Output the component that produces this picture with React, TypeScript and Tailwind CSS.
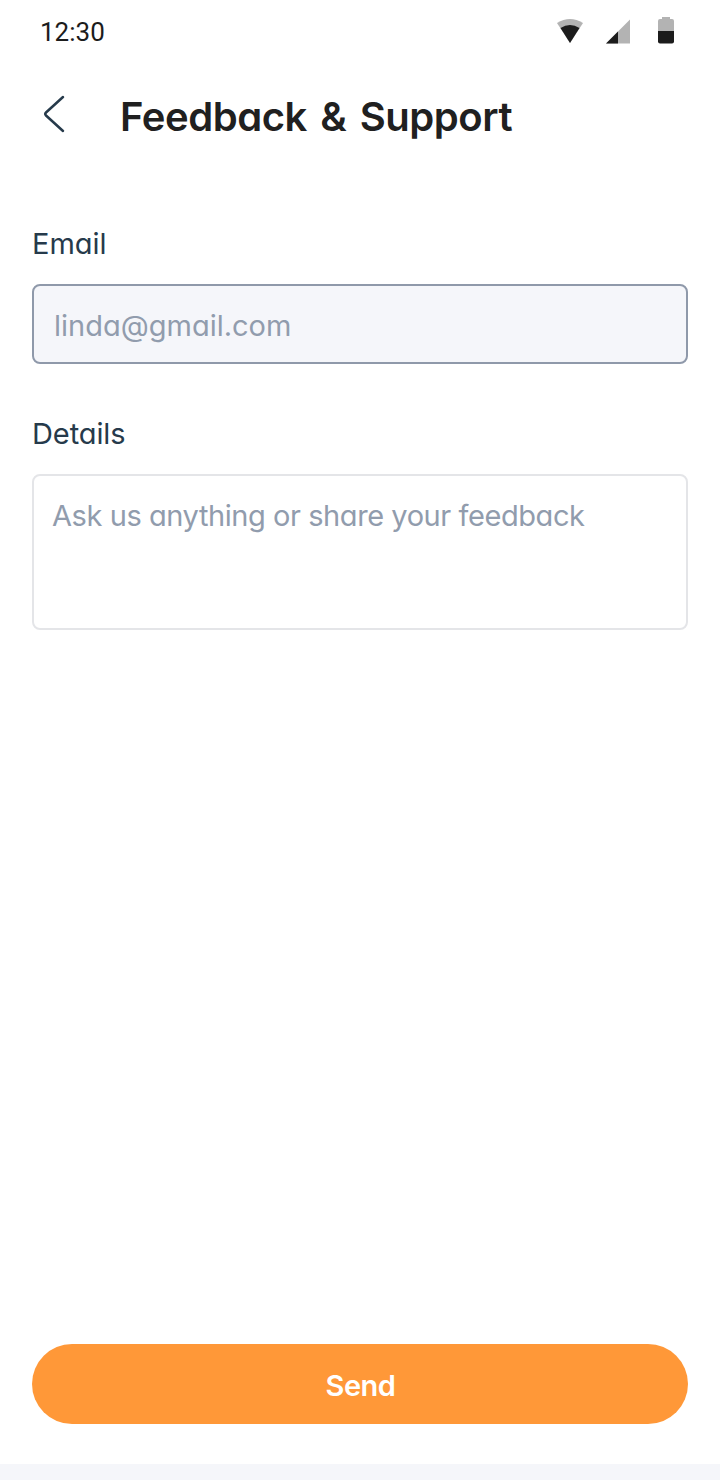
export default function App() {
  return (
    <div className="flex h-[1480px] w-[720px] flex-col bg-white font-['Inter',sans-serif] [font-feature-settings:'cv11']">
      <header className="flex h-16 items-center justify-between pl-10 pr-[45px]">
        <span className="font-['Roboto',sans-serif] text-[26px] leading-8 text-[#1c1c1c]">12:30</span>
        <svg className="mb-1" width="118" height="28" viewBox="0 0 118 28" aria-hidden="true">
          <path d="M0 7Q13 -1 26 7L13 27Z" fill="#b3b3b3" />
          <path d="M3.500 12Q13 6 22.500 12L13 27Z" fill="#1c1c1c" />
          <path d="M49 27.500L73 3.500V27.500Z" fill="#b3b3b3" />
          <path d="M49 27.500L61 15.500V27.500Z" fill="#1c1c1c" />
          <path d="M101 15V5Q101 3 103 3H105V1H113V3H115Q117 3 117 5V15Z" fill="#b3b3b3" />
          <path d="M101 15H117V25.500Q117 27.500 115 27.500H103Q101 27.500 101 25.500Z" fill="#1c1c1c" />
        </svg>
      </header>
      <div className="flex h-[104px] items-center pl-10">
        <svg className="mb-1 mr-[52px]" width="28" height="40" viewBox="0 0 28 40" fill="none" stroke="#263a4b" strokeWidth="2.500" strokeLinecap="round" strokeLinejoin="round"><path d="M23 3L6 18.500Q4.500 20 6 21.500L23 37" /></svg>
        <h1 className="pt-0.5 text-[40px] font-semibold tracking-[-0.45px] text-[#202020] [word-spacing:3.750px]">Feedback &amp; Support</h1>
      </div>
      <main className="flex grow flex-col px-8 pt-[56px]">
        <label className="text-[29px] leading-10 text-[#263a4b]">Email</label>
        <div className="mt-5 h-20 rounded-lg border-2 border-[#8f99aa] bg-[#f5f6fa] px-5 pt-5 text-[29px] leading-10 text-[#919cad]">linda@gmail.com</div>
        <label className="mt-[50px] text-[29px] leading-10 tracking-[-0.1px] text-[#263a4b]">Details</label>
        <div className="mt-5 h-[156px] rounded-lg border-2 border-[#e4e5e8] px-[18px] pt-5 text-[29px] leading-10 tracking-[-0.43px] text-[#919cad]">Ask us anything or share your feedback</div>
        <button className="mb-10 mt-auto h-20 rounded-full bg-[#ff9838] pl-px pt-1 text-[29px] font-semibold tracking-[-0.5px] text-white">Send</button>
      </main>
      <div className="h-4 bg-[#f5f6fa]" />
    </div>
  );
}
